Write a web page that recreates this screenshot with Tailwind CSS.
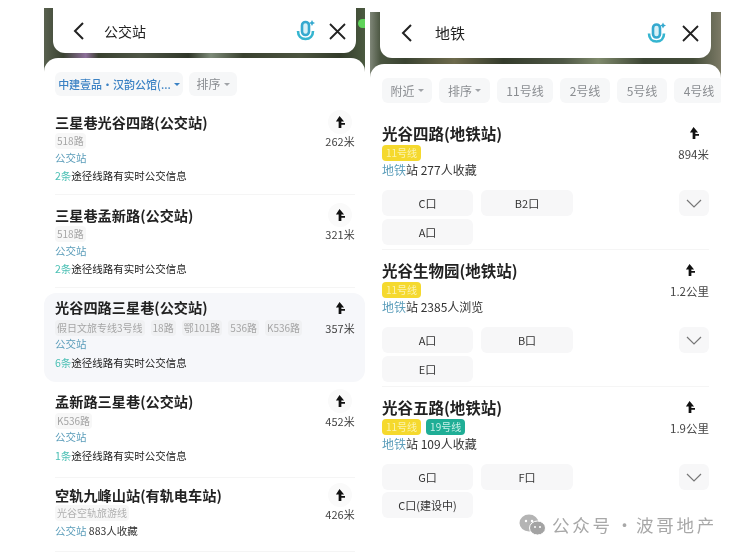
<!DOCTYPE html>
<html lang="zh-CN">
<head>
  <meta charset="UTF-8" />
  <title>公交站 / 地铁</title>
  <script src="https://cdn.jsdelivr.net/npm/@tailwindcss/browser@4"></script>
</head>
<body class="bg-white">
  <div class="relative w-[740px] h-[555px] overflow-hidden bg-white text-[#222] font-['Noto_Sans_CJK_SC','Noto_Sans',sans-serif] blur-[0.5px]">
    <div class="flex pl-[44px] gap-[5px]">

      <!-- left phone: bus stops -->
      <section class="relative w-[321px] h-[555px]">
        <div class="absolute top-[8px] left-0 right-0 h-[70px] bg-[linear-gradient(90deg,#59614f,#3a4231_6%,#8d6f9a_13%,#39402f_17%,#4f5647_30%,#2f3628_45%,#7d8a78_52%,#39412f_62%,#4c5440_80%,#333b2a_92%,#4b5a40)]"></div>
        <span class="absolute top-[19px] right-0 w-[7px] h-[9px] rounded-l-full bg-[#5fd35a]"></span>
        <div class="relative mx-[9px] h-[53px] bg-white rounded-b-xl flex items-center pt-[9px] pl-[19px] pr-[10px]">
          <svg class="w-[14px] h-[20px]" viewBox="0 0 14 20" fill="none" stroke="#222" stroke-width="2"><path d="M11 2 3 10l8 8" /></svg>
          <span class="ml-[18px] text-[14px]">公交站</span>
          <svg class="ml-auto w-[20px] h-[24px]" viewBox="0 0 20 24" fill="none"><rect x="6" y="3" width="7" height="13" rx="3.5" fill="#d8f1f7" stroke="#35a9cf" stroke-width="2.6" /><path d="M2 12c0 5 3 8 7.500 8s7.500-3 7.500-8" stroke="#35b5d0" stroke-width="2.600" /><path d="M16 1l1 2 2 1-2 1-1 2-1-2-2-1 2-1z" fill="#35a9cf" /></svg>
          <svg class="ml-[13px] w-[17px] h-[17px]" viewBox="0 0 17 17" stroke="#222" stroke-width="1.800"><path d="M1 1l15 15M16 1 1 16" /></svg>
        </div>
        <div class="absolute top-[58px] left-0 right-0 h-[30px] bg-white rounded-t-[14px]"></div>

        <div class="relative mt-[19px] h-[33px] px-[11px] flex items-start gap-[6px] text-[12px]">
          <span class="h-[24px] w-[128px] rounded-md bg-[#f6f7f8] flex items-center justify-center text-[#3b82c4] font-medium whitespace-nowrap text-[11px]">中建壹品·汉韵公馆(...<i class="ml-[3px] border-x-[3px] border-t-[3px] border-x-transparent border-t-[#3b82c4]"></i></span>
          <span class="h-[24px] w-[48px] rounded-md bg-[#f6f7f8] flex items-center justify-center text-[#8a8d91]">排序<i class="ml-[3px] border-x-[3px] border-t-[3px] border-x-transparent border-t-[#a0a3a7]"></i></span>
        </div>

        <article class="relative h-[90px] ml-[11px] mr-[10px] pt-[7px] border-b border-[#f5f5f5] mb-[3px] flex justify-between">
          <div>
            <h3 class="text-[14.200px] leading-[20px] font-bold">三星巷光谷四路(公交站)</h3>
            <p class="mt-[1px] h-[16px] flex gap-[8px] text-[10px] leading-[16px] text-[#a5a5a5]"><span class="px-[2px] bg-[#f7f7f7] rounded-sm">518路</span></p>
            <p class="mt-[1px] text-[10.500px] leading-[16px] text-[#5b9dba]">公交站</p>
            <p class="mt-[2px] text-[10.500px] leading-[16px]"><span class="text-[#4cc0b5]">2条</span>途径线路有实时公交信息</p>
          </div>
          <div class="w-[30px] flex flex-col items-center">
            <span class="w-[24px] h-[24px] -mt-[2px] rounded-full bg-[#fafafa] flex items-center justify-center">
              <svg class="w-[10px] h-[12px]" viewBox="0 0 11 13" fill="#111"><path d="M5 0 10 6H7V7.500H11V9.500H7V13H4V6H1z" /></svg>
            </span>
            <span class="-mt-[1px] text-[11px] leading-[16px] text-[#444] whitespace-nowrap">262米</span>
          </div>
        </article>

        <article class="relative h-[90px] ml-[11px] mr-[10px] pt-[7px] border-b border-[#f5f5f5] mb-[5px] flex justify-between">
          <div>
            <h3 class="text-[14.200px] leading-[20px] font-bold">三星巷孟新路(公交站)</h3>
            <p class="mt-[1px] h-[16px] flex gap-[8px] text-[10px] leading-[16px] text-[#a5a5a5]"><span class="px-[2px] bg-[#f7f7f7] rounded-sm">518路</span></p>
            <p class="mt-[1px] text-[10.500px] leading-[16px] text-[#5b9dba]">公交站</p>
            <p class="mt-[2px] text-[10.500px] leading-[16px]"><span class="text-[#4cc0b5]">2条</span>途径线路有实时公交信息</p>
          </div>
          <div class="w-[30px] flex flex-col items-center">
            <span class="w-[24px] h-[24px] -mt-[2px] rounded-full bg-[#fafafa] flex items-center justify-center">
              <svg class="w-[10px] h-[12px]" viewBox="0 0 11 13" fill="#111"><path d="M5 0 10 6H7V7.500H11V9.500H7V13H4V6H1z" /></svg>
            </span>
            <span class="-mt-[1px] text-[11px] leading-[16px] text-[#444] whitespace-nowrap">321米</span>
          </div>
        </article>

        <article class="relative h-[89px] mb-[9px] pl-[11px] pr-[10px] pt-[4px] rounded-xl bg-[#f6f7fa] flex justify-between">
          <div>
            <h3 class="text-[14.200px] leading-[20px] font-bold">光谷四路三星巷(公交站)</h3>
            <p class="mt-[3px] h-[16px] flex gap-[6px] text-[10px] leading-[16px] text-[#a5a5a5]">
              <span class="px-[2px] bg-[#f0f1f3] rounded-sm">假日文旅专线3号线</span>
              <span class="px-[2px] bg-[#f0f1f3] rounded-sm">18路</span>
              <span class="px-[2px] bg-[#f0f1f3] rounded-sm">鄂101路</span>
              <span class="px-[2px] bg-[#f0f1f3] rounded-sm">536路</span>
              <span class="px-[2px] bg-[#f0f1f3] rounded-sm">K536路</span>
            </p>
            <p class="text-[10.500px] leading-[16px] text-[#5b9dba]">公交站</p>
            <p class="mt-[3px] text-[10.500px] leading-[16px]"><span class="text-[#4cc0b5]">6条</span>途径线路有实时公交信息</p>
          </div>
          <div class="w-[30px] flex flex-col items-center">
            <span class="w-[24px] h-[24px] -mt-[1px] flex items-center justify-center">
              <svg class="w-[10px] h-[12px]" viewBox="0 0 11 13" fill="#111"><path d="M5 0 10 6H7V7.500H11V9.500H7V13H4V6H1z" /></svg>
            </span>
            <span class="text-[11px] leading-[16px] text-[#444] whitespace-nowrap">357米</span>
          </div>
        </article>

        <article class="relative h-[87px] ml-[11px] mr-[10px] border-b border-[#f5f5f5] mb-[7px] flex justify-between">
          <div>
            <h3 class="text-[14.200px] leading-[20px] font-bold">孟新路三星巷(公交站)</h3>
            <p class="mt-[2px] h-[16px] flex gap-[8px] text-[10px] leading-[16px] text-[#a5a5a5]"><span class="px-[2px] bg-[#f7f7f7] rounded-sm">K536路</span></p>
            <p class="text-[10.500px] leading-[16px] text-[#5b9dba]">公交站</p>
            <p class="mt-[3px] text-[10.500px] leading-[16px]"><span class="text-[#4cc0b5]">1条</span>途径线路有实时公交信息</p>
          </div>
          <div class="w-[30px] flex flex-col items-center">
            <span class="w-[24px] h-[24px] -mt-[2px] rounded-full bg-[#fafafa] flex items-center justify-center">
              <svg class="w-[10px] h-[12px]" viewBox="0 0 11 13" fill="#111"><path d="M5 0 10 6H7V7.500H11V9.500H7V13H4V6H1z" /></svg>
            </span>
            <span class="text-[11px] leading-[16px] text-[#444] whitespace-nowrap">452米</span>
          </div>
        </article>

        <article class="relative h-[67px] ml-[11px] mr-[10px] border-b border-[#f5f5f5] flex justify-between">
          <div>
            <h3 class="text-[14.200px] leading-[20px] font-bold">空轨九峰山站(有轨电车站)</h3>
            <p class="h-[16px] flex text-[10px] leading-[16px] text-[#b0b0b0]"><span class="px-[2px] bg-[#f7f7f7] rounded-sm">光谷空轨旅游线</span></p>
            <p class="mt-[2px] text-[10.500px] leading-[16px] text-[#333]"><span class="text-[#5b9dba]">公交站</span> 883人收藏</p>
          </div>
          <div class="w-[30px] flex flex-col items-center">
            <span class="w-[24px] h-[24px] -mt-[2px] rounded-full bg-[#fafafa] flex items-center justify-center">
              <svg class="w-[10px] h-[12px]" viewBox="0 0 11 13" fill="#111"><path d="M5 0 10 6H7V7.500H11V9.500H7V13H4V6H1z" /></svg>
            </span>
            <span class="-mt-[1px] text-[11px] leading-[16px] text-[#444] whitespace-nowrap">426米</span>
          </div>
        </article>
      </section>

      <!-- right phone: subway -->
      <section class="relative w-[351px] h-[555px]">
        <div class="absolute top-[12px] left-0 right-0 h-[70px] bg-[linear-gradient(90deg,#7f8678,#4a5540_3%,#3a4331_10%,#6d6a4c_24%,#343b2b_38%,#4e5745_55%,#7f8a6c_65%,#3c4534_78%,#434c39_92%,#7c7a66)]"></div>
        <div class="relative mx-[10px] h-[58px] bg-white rounded-b-xl flex items-center pt-[8px] pl-[20px] pr-[12px]">
          <svg class="w-[14px] h-[20px]" viewBox="0 0 14 20" fill="none" stroke="#222" stroke-width="2"><path d="M11 2 3 10l8 8" /></svg>
          <span class="ml-[21px] text-[15px]">地铁</span>
          <svg class="ml-auto w-[20px] h-[25px]" viewBox="0 0 20 24" fill="none"><rect x="6" y="3" width="7" height="13" rx="3.5" fill="#d8f1f7" stroke="#35a9cf" stroke-width="2.6" /><path d="M2 12c0 5 3 8 7.500 8s7.500-3 7.500-8" stroke="#35b5d0" stroke-width="2.600" /><path d="M16 1l1 2 2 1-2 1-1 2-1-2-2-1 2-1z" fill="#35a9cf" /></svg>
          <svg class="ml-[15px] w-[17px] h-[17px]" viewBox="0 0 17 17" stroke="#222" stroke-width="1.800"><path d="M1 1l15 15M16 1 1 16" /></svg>
        </div>
        <div class="absolute top-[64px] left-0 right-0 h-[30px] bg-white rounded-t-[14px]"></div>

        <div class="relative mt-[20px] h-[25px] pl-[12px] flex gap-[7px] text-[12px] text-[#8a8d91] overflow-hidden">
          <span class="w-[50px] rounded-md bg-[#f6f7f8] flex items-center justify-center shrink-0">附近<i class="ml-[3px] border-x-[3px] border-t-[3px] border-x-transparent border-t-[#a0a3a7]"></i></span>
          <span class="w-[51px] rounded-md bg-[#f6f7f8] flex items-center justify-center shrink-0">排序<i class="ml-[3px] border-x-[3px] border-t-[3px] border-x-transparent border-t-[#a0a3a7]"></i></span>
          <span class="w-[56px] rounded-md bg-[#f6f7f8] flex items-center justify-center shrink-0">11号线</span>
          <span class="w-[50px] rounded-md bg-[#f6f7f8] flex items-center justify-center shrink-0">2号线</span>
          <span class="w-[50px] rounded-md bg-[#f6f7f8] flex items-center justify-center shrink-0">5号线</span>
          <span class="w-[50px] rounded-md bg-[#f6f7f8] flex items-center justify-center shrink-0">4号线</span>
        </div>

        <article class="relative h-[127px] mt-[20px] mx-[12px] border-b border-[#f5f5f5]">
          <div class="flex justify-between h-[67px]">
            <div>
              <h3 class="text-[15.500px] leading-[20px] font-bold">光谷四路(地铁站)</h3>
              <p class="mt-[2px] flex gap-[5px]"><span class="h-[16px] px-[4px] rounded-sm bg-[#f5d92e] text-[10px] leading-[16px] text-[#fbf3b0]">11号线</span></p>
              <p class="mt-[1px] text-[12px] leading-[16px] text-[#333]"><span class="text-[#5b9dba]">地铁</span>站 277人收藏</p>
            </div>
            <div class="flex flex-col items-center">
              <svg class="mt-[4px] w-[10px] h-[12px]" viewBox="0 0 11 13" fill="#111"><path d="M5 0 10 6H7V7.500H11V9.500H7V13H4V6H1z" /></svg>
              <span class="mt-[7px] text-[11.500px] leading-[16px] text-[#444] whitespace-nowrap">894米</span>
            </div>
          </div>
          <div class="grid grid-cols-[91px_92px_1fr_30px] gap-x-[8px] gap-y-[3px] text-[11px] text-[#333]">
            <span class="h-[26px] rounded-md bg-[#f7f7f8] flex items-center justify-center">C口</span>
            <span class="h-[26px] rounded-md bg-[#f7f7f8] flex items-center justify-center">B2口</span>
            <span></span>
            <span class="h-[26px] rounded-md bg-[#f7f7f8] flex items-center justify-center"><svg class="w-[16px] h-[9px]" viewBox="0 0 16 9" fill="none" stroke="#777" stroke-width="1.200"><path d="M1 1l7 7 7-7" /></svg></span>
            <span class="h-[26px] rounded-md bg-[#f7f7f8] flex items-center justify-center">A口</span>
          </div>
        </article>

        <article class="relative h-[137px] mx-[12px] border-b border-[#f5f5f5]">
          <div class="flex justify-between h-[67px] pt-[10px]">
            <div>
              <h3 class="text-[15.500px] leading-[20px] font-bold">光谷生物园(地铁站)</h3>
              <p class="mt-[2px] flex gap-[5px]"><span class="h-[16px] px-[4px] rounded-sm bg-[#f5d92e] text-[10px] leading-[16px] text-[#fbf3b0]">11号线</span></p>
              <p class="mt-[1px] text-[12px] leading-[16px] text-[#333]"><span class="text-[#5b9dba]">地铁</span>站 2385人浏览</p>
            </div>
            <div class="flex flex-col items-center">
              <svg class="mt-[4px] w-[10px] h-[12px]" viewBox="0 0 11 13" fill="#111"><path d="M5 0 10 6H7V7.500H11V9.500H7V13H4V6H1z" /></svg>
              <span class="mt-[7px] text-[11.500px] leading-[16px] text-[#444] whitespace-nowrap">1.2公里</span>
            </div>
          </div>
          <div class="mt-[10px] grid grid-cols-[91px_92px_1fr_30px] gap-x-[8px] gap-y-[3px] text-[11px] text-[#333]">
            <span class="h-[26px] rounded-md bg-[#f7f7f8] flex items-center justify-center">A口</span>
            <span class="h-[26px] rounded-md bg-[#f7f7f8] flex items-center justify-center">B口</span>
            <span></span>
            <span class="h-[26px] rounded-md bg-[#f7f7f8] flex items-center justify-center"><svg class="w-[16px] h-[9px]" viewBox="0 0 16 9" fill="none" stroke="#777" stroke-width="1.200"><path d="M1 1l7 7 7-7" /></svg></span>
            <span class="h-[26px] rounded-md bg-[#f7f7f8] flex items-center justify-center">E口</span>
          </div>
        </article>

        <article class="relative mx-[12px]">
          <div class="flex justify-between h-[67px] pt-[10px]">
            <div>
              <h3 class="text-[15.500px] leading-[20px] font-bold">光谷五路(地铁站)</h3>
              <p class="mt-[2px] flex gap-[5px]">
                <span class="h-[16px] px-[4px] rounded-sm bg-[#f5d92e] text-[10px] leading-[16px] text-[#fbf3b0]">11号线</span>
                <span class="h-[16px] px-[4px] rounded-sm bg-[#1fae96] text-[10px] leading-[16px] text-[#c9f0e8]">19号线</span>
              </p>
              <p class="mt-[1px] text-[12px] leading-[16px] text-[#333]"><span class="text-[#5b9dba]">地铁</span>站 109人收藏</p>
            </div>
            <div class="flex flex-col items-center">
              <svg class="mt-[4px] w-[10px] h-[12px]" viewBox="0 0 11 13" fill="#111"><path d="M5 0 10 6H7V7.500H11V9.500H7V13H4V6H1z" /></svg>
              <span class="mt-[7px] text-[11.500px] leading-[16px] text-[#444] whitespace-nowrap">1.9公里</span>
            </div>
          </div>
          <div class="mt-[10px] grid grid-cols-[91px_92px_1fr_30px] gap-x-[8px] gap-y-[2px] text-[11px] text-[#333]">
            <span class="h-[26px] rounded-md bg-[#f7f7f8] flex items-center justify-center">G口</span>
            <span class="h-[26px] rounded-md bg-[#f7f7f8] flex items-center justify-center">F口</span>
            <span></span>
            <span class="h-[26px] rounded-md bg-[#f7f7f8] flex items-center justify-center"><svg class="w-[16px] h-[9px]" viewBox="0 0 16 9" fill="none" stroke="#777" stroke-width="1.200"><path d="M1 1l7 7 7-7" /></svg></span>
            <span class="h-[26px] rounded-md bg-[#f7f7f8] flex items-center justify-center whitespace-nowrap">C口(建设中)</span>
          </div>
        </article>
      </section>
    </div>

    <!-- watermark over the page -->
    <div class="absolute left-[519px] top-[512px] flex items-center text-[#a8a8a8] text-[17.500px] tracking-[2.800px] whitespace-nowrap">
      <svg class="w-[28px] h-[22px] mr-[5px]" viewBox="0 0 28 22"><ellipse cx="10" cy="9" rx="9.500" ry="8.500" fill="#b4b4b4" /><ellipse cx="18.500" cy="14" rx="8" ry="7" fill="#a3a3a3" stroke="#fff" stroke-width="1" /><circle cx="7" cy="7" r="1.200" fill="#fff" /><circle cx="13" cy="7" r="1.200" fill="#fff" /><circle cx="16" cy="13" r="1" fill="#fff" /><circle cx="21" cy="13" r="1" fill="#fff" /></svg>
      <span>公众号</span>
      <span class="w-[23px] text-center tracking-normal">·</span>
      <span>波哥地产</span>
    </div>
  </div>
</body>
</html>
